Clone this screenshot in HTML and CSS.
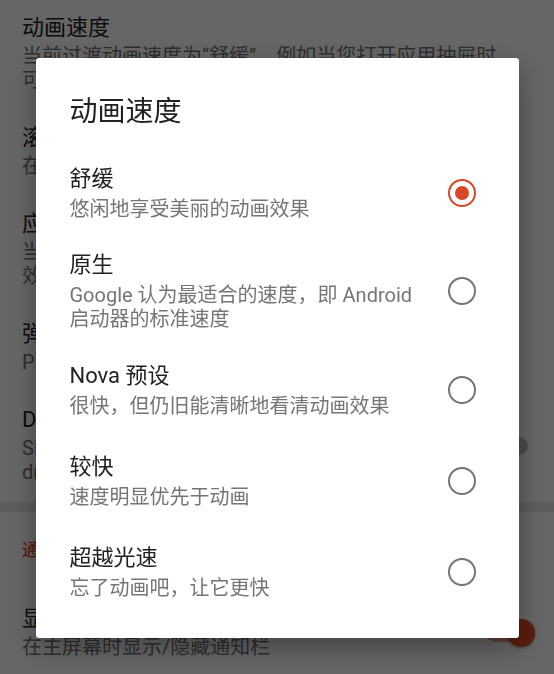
FILE: index.html
```html
<!DOCTYPE html>
<html lang="zh-CN">
<head>
    <meta charset="UTF-8">
    <title>动画速度</title>
    <link rel="stylesheet" href="styles.css">
</head>
<body>
    <main class="settings">
        <div class="pref">
            <div class="pref-text">
                <div class="pref-title">动画速度</div>
                <div class="pref-summary">当前过渡动画速度为“舒缓”，例如当您打开应用抽屉时，<br>可以看到此动画效果</div>
            </div>
        </div>
        <div class="pref">
            <div class="pref-text">
                <div class="pref-title">滚动效果</div>
                <div class="pref-summary">在主屏幕页面之间滑动时使用的过渡效果</div>
            </div>
        </div>
        <div class="pref">
            <div class="pref-text">
                <div class="pref-title">应用启动动画</div>
                <div class="pref-summary">当您从主屏幕或抽屉中打开应用时使用的动画<br>效果</div>
            </div>
        </div>
        <div class="pref">
            <div class="pref-text">
                <div class="pref-title">弹性滚动</div>
                <div class="pref-summary">Pixel 风格的过度滚动弹性效果</div>
            </div>
        </div>
        <div class="pref">
            <div class="pref-text">
                <div class="pref-title">Drawer swipe indicator</div>
                <div class="pref-summary">Slide up from the dock to open the<br>drawer</div>
            </div>
            <span class="switch"><span class="switch-track"></span><span class="switch-thumb"></span></span>
        </div>

        <div class="category-gap"></div>
        <div class="category">通知栏</div>

        <div class="pref">
            <div class="pref-text">
                <div class="pref-title">显示通知栏</div>
                <div class="pref-summary">在主屏幕时显示/隐藏通知栏</div>
            </div>
            <span class="switch switch-on"><span class="switch-track"></span><span class="switch-thumb"></span></span>
        </div>
    </main>

    <div class="scrim">
        <div class="dialog">
            <h2 class="dialog-title">动画速度</h2>
            <ul class="options">
                <li class="option">
                    <div class="option-text">
                        <div class="option-title">舒缓</div>
                        <div class="option-summary">悠闲地享受美丽的动画效果</div>
                    </div>
                    <span class="radio radio-checked"></span>
                </li>
                <li class="option">
                    <div class="option-text">
                        <div class="option-title">原生</div>
                        <div class="option-summary">Google 认为最适合的速度，即 Android 启动器的标准速度</div>
                    </div>
                    <span class="radio"></span>
                </li>
                <li class="option">
                    <div class="option-text">
                        <div class="option-title">Nova 预设</div>
                        <div class="option-summary">很快，但仍旧能清晰地看清动画效果</div>
                    </div>
                    <span class="radio"></span>
                </li>
                <li class="option">
                    <div class="option-text">
                        <div class="option-title">较快</div>
                        <div class="option-summary">速度明显优先于动画</div>
                    </div>
                    <span class="radio"></span>
                </li>
                <li class="option">
                    <div class="option-text">
                        <div class="option-title">超越光速</div>
                        <div class="option-summary">忘了动画吧，让它更快</div>
                    </div>
                    <span class="radio"></span>
                </li>
            </ul>
        </div>
    </div>
</body>
</html>
```

FILE: styles.css
```css
/* 设置页 + 单选对话框 */
:root {
    --accent: #d9472b;
    --text: #212121;
    --text-2: #757575;
}

body {
    margin: 0;
    width: 554px;
    height: 674px;
    overflow: hidden;
    background: #fff;
    font-family: Roboto, "Noto Sans CJK SC", sans-serif;
    color: var(--text);
}

/* 背景设置列表 */
.pref {
    display: flex;
    align-items: center;
    padding: 15px 19px 18px 22px;
}
.pref-text {
    flex: 1;
    min-width: 0;
}
.pref-title {
    font-size: 22px;
    line-height: 26px;
    white-space: nowrap;
    overflow: hidden;
}
.pref-summary {
    margin-top: 3px;
    font-size: 20px;
    line-height: 24px;
    color: var(--text-2);
    white-space: nowrap;
    overflow: hidden;
}
.category-gap {
    height: 10px;
    background: #e8e8e8;
}
.category {
    padding: 28px 22px 31px;
    font-size: 17px;
    line-height: 20px;
    font-weight: 500;
    color: var(--accent);
}

.switch {
    position: relative;
    flex: none;
    width: 56px;
    height: 28px;
}
.switch-track {
    position: absolute;
    right: 7px;
    top: 5px;
    width: 42px;
    height: 18px;
    border-radius: 9px;
    background: #bdbdbd;
}
.switch-thumb {
    position: absolute;
    left: 0;
    top: 0;
    width: 28px;
    height: 28px;
    border-radius: 50%;
    background: #f1f1f1;
    box-shadow: 0 1px 3px rgba(0, 0, 0, 0.4);
}
.switch-on .switch-track {
    background: #f0a08f;
}
.switch-on .switch-thumb {
    left: auto;
    right: 0;
    background: #e24a22;
}

/* 遮罩与对话框 */
.scrim {
    position: fixed;
    inset: 0;
    background: rgba(0, 0, 0, 0.6);
    display: flex;
    justify-content: center;
    align-items: flex-start;
    padding-top: 58px;
}
.dialog {
    width: 483px;
    padding: 37px 0 21px;
    background: #fff;
    border-radius: 3px;
    box-shadow: 0 10px 28px rgba(0, 0, 0, 0.35);
}
.dialog-title {
    margin: 0 34px 18px;
    font-size: 28px;
    line-height: 34px;
    font-weight: 400;
    color: var(--text);
}
.options {
    list-style: none;
    margin: 0;
    padding: 0;
}
.option {
    display: flex;
    align-items: center;
    gap: 30px;
    box-sizing: border-box;
    min-height: 91px;
    padding: 13px 43px 13px 34px;
}
.option-text {
    flex: 1;
}
.option-title {
    font-size: 22px;
    line-height: 28px;
}
.option-summary {
    margin-top: 4px;
    font-size: 20px;
    line-height: 24px;
    color: var(--text-2);
}

.radio {
    flex: none;
    box-sizing: border-box;
    width: 28px;
    height: 28px;
    border: 2.6px solid var(--text-2);
    border-radius: 50%;
    display: grid;
    place-items: center;
}
.radio-checked {
    border-color: var(--accent);
}
.radio-checked::after {
    content: "";
    width: 14px;
    height: 14px;
    border-radius: 50%;
    background: var(--accent);
}
```
